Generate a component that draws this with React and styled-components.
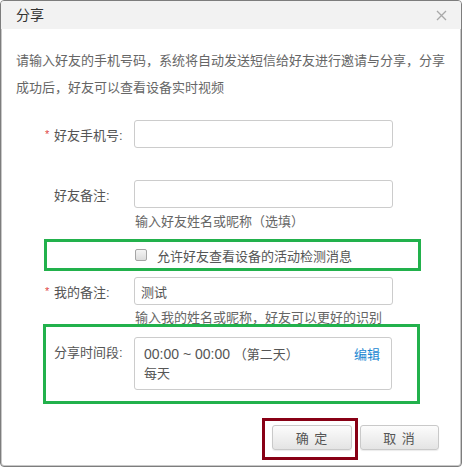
import React from 'react'
import styled, { createGlobalStyle } from 'styled-components'

const GlobalStyle = createGlobalStyle`
  html, body {
    margin: 0;
    padding: 0;
    background: #fff;
  }
  body {
    font-family: "Liberation Sans", "Noto Sans CJK SC", sans-serif;
    font-size: 13px;
    color: #555;
  }
`

const Dialog = styled.div`
  box-sizing: border-box;
  width: 462px;
  height: 467px;
  border: 1px solid #7d7d7d;
  box-shadow: inset 0 0 0 1px #c8c8c8;
  border-radius: 4px;
  overflow: hidden;
  display: flex;
  flex-direction: column;
`

const Header = styled.div`
  height: 28px;
  flex: none;
  background: #f2f2f2;
  display: flex;
  align-items: center;
  justify-content: space-between;
  padding: 0 14px 0 15px;
`

const Title = styled.div`
  font-size: 14px;
  color: #333;
  line-height: 28px;
`

const Close = styled.button`
  border: 0;
  background: none;
  padding: 0;
  width: 12px;
  height: 12px;
  display: flex;
  align-items: center;
  justify-content: center;
  cursor: pointer;
`

const Body = styled.div`
  padding: 18px 0 0 15px;
  display: flex;
  flex-direction: column;
`

const Intro = styled.p`
  margin: 0;
  line-height: 27px;
  color: #666;
  width: 440px;
`

const Row = styled.div`
  display: flex;
  align-items: center;
  margin-top: ${p => p.top || 0}px;
`

const Label = styled.div`
  width: 118px;
  flex: none;
  box-sizing: border-box;
  padding-left: 29px;
  display: flex;
  align-items: center;
  color: #555;
`

const Star = styled.span`
  width: 9px;
  color: #e04545;
  font-size: 11px;
  visibility: ${p => (p.show ? 'visible' : 'hidden')};
`

const Input = styled.input`
  box-sizing: border-box;
  width: 259px;
  height: 28px;
  border: 1px solid #ccc;
  border-radius: 3px;
  padding: 0 6px;
  font: inherit;
  color: #555;
  outline: none;
`

const Hint = styled.div`
  margin: ${p => p.top}px 0 0 119px;
  line-height: 20px;
  color: #666;
`

const Mark = styled.div`
  position: relative;
  box-sizing: border-box;
  border: 3px solid #22b14c;
  width: ${p => p.w}px;
  margin-left: ${p => p.left}px;
  margin-top: ${p => p.top}px;
`

const CheckRow = styled.label`
  height: 26px;
  display: flex;
  align-items: center;
  padding-left: 88px;
  color: #555;
`

const Check = styled.span`
  box-sizing: border-box;
  width: 12px;
  height: 12px;
  border: 1px solid #a5a5a5;
  border-radius: 2px;
  background: linear-gradient(#f4f4f4, #dcdcdc);
  margin-right: 10px;
`

const TimeRow = styled.div`
  display: flex;
  align-items: flex-start;
  padding: 10px 0 11px 8px;
`

const TimeLabel = styled.div`
  width: 80px;
  flex: none;
  line-height: 20px;
  margin-top: 6px;
`

const TimeBox = styled.div`
  box-sizing: border-box;
  width: 258px;
  height: 53px;
  border: 1px solid #ccc;
  border-radius: 3px;
  padding: 7px 11px 0 9px;
  line-height: 19px;
  color: #555;
`

const TimeLine = styled.div`
  display: flex;
  justify-content: space-between;
`

const Clock = styled.span`
  font-size: 14px;
`

const Edit = styled.a`
  color: #1a87d2;
  cursor: pointer;
`

const Footer = styled.div`
  display: flex;
  justify-content: flex-end;
  align-items: flex-start;
  padding-right: 22px;
  margin-top: 14px;
`

const Focus = styled.div`
  border: 3px solid #880015;
  padding: 4px 3px 7px 7px;
`

const Button = styled.button`
  box-sizing: border-box;
  width: ${p => p.w}px;
  height: 25px;
  margin-top: ${p => p.top || 0}px;
  margin-left: ${p => p.left || 0}px;
  border: 1px solid #c9c9c9;
  border-radius: 3px;
  background: linear-gradient(#fcfcfc, #e4e4e4);
  box-shadow: 0 1px 1px rgba(0, 0, 0, 0.08);
  font: inherit;
  color: #555;
  letter-spacing: 1px;
  padding: 0;
  cursor: pointer;
`

export default function App() {
  return (
    <>
      <GlobalStyle />
      <Dialog>
        <Header>
          <Title>分享</Title>
          <Close aria-label="close">
            <svg width="11" height="11" viewBox="0 0 11 11">
              <path d="M1 1L10 10M10 1L1 10" stroke="#a8a8a8" strokeWidth="1.3" />
            </svg>
          </Close>
        </Header>
        <Body>
          <Intro>请输入好友的手机号码，系统将自动发送短信给好友进行邀请与分享，分享成功后，好友可以查看设备实时视频</Intro>

          <Row top={19}>
            <Label><Star show>*</Star>好友手机号:</Label>
            <Input />
          </Row>

          <Row top={32}>
            <Label><Star>*</Star>好友备注:</Label>
            <Input />
          </Row>
          <Hint top={4}>输入好友姓名或昵称（选填）</Hint>

          <Mark w={377} left={28} top={7}>
            <CheckRow>
              <Check />
              允许好友查看设备的活动检测消息
            </CheckRow>
          </Mark>

          <Row top={6}>
            <Label><Star show>*</Star>我的备注:</Label>
            <Input defaultValue="测试" />
          </Row>
          <Hint top={3}>输入我的姓名或昵称，好友可以更好的识别</Hint>

          <Mark w={377} left={27} top={-4}>
            <TimeRow>
              <TimeLabel>分享时间段:</TimeLabel>
              <TimeBox>
                <TimeLine>
                  <span><Clock>00:00 ~ 00:00</Clock> （第二天）</span>
                  <Edit>编辑</Edit>
                </TimeLine>
                <div>每天</div>
              </TimeBox>
            </TimeRow>
          </Mark>

          <Footer>
            <Focus>
              <Button w={80}>确 定</Button>
            </Focus>
            <Button w={79} top={7} left={2}>取 消</Button>
          </Footer>
        </Body>
      </Dialog>
    </>
  )
}
